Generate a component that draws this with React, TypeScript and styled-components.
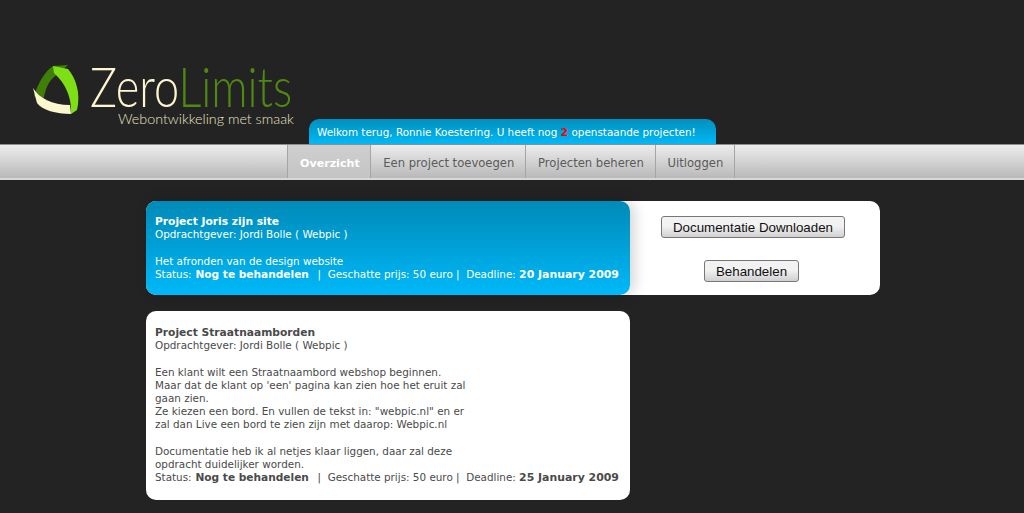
import styled, { createGlobalStyle } from "styled-components";

const GlobalStyle = createGlobalStyle`
  html, body {
    margin: 0;
    padding: 0;
    background: #232323;
  }
  body {
    font-family: "DejaVu Sans", Verdana, sans-serif;
    font-size: 10.4px;
    color: #4a4a4a;
  }
  b {
    font-size: 10.9px;
  }
`;

const Header = styled.header`
  height: 144px;
  display: flex;
  align-items: flex-end;
  padding-left: 30px;
`;

const Logo = styled.div`
  width: 279px;
  align-self: flex-start;
  margin-top: 62px;
  display: flex;
  gap: 5px;
`;

const LogoMark = styled.svg`
  width: 55px;
  height: 55px;
  flex: none;
`;

const LogoText = styled.div`
  display: flex;
  flex-direction: column;
`;

const LogoName = styled.div`
  font-family: Lato, sans-serif;
  font-weight: 300;
  font-size: 55px;
  line-height: 48px;
  color: #fdf6cf;
  white-space: nowrap;
  transform: scaleX(0.82);
  transform-origin: left center;
  span {
    color: #4f8a10;
  }
`;

const LogoSlogan = styled.div`
  font-family: Lato, sans-serif;
  font-weight: 300;
  font-size: 14.3px;
  line-height: 18px;
  color: #e8e3c0;
  margin-left: 28px;
  white-space: nowrap;
`;

const Welcome = styled.div`
  width: 407px;
  height: 25px;
  box-sizing: border-box;
  padding: 7px 0 0 8px;
  border-radius: 10px 10px 0 0;
  background: linear-gradient(#008fbe, #00b9f5);
  color: #fff;
  line-height: 13px;
  white-space: nowrap;
  b {
    color: #f00;
  }
`;

const Nav = styled.nav`
  height: 36px;
  box-sizing: border-box;
  border-top: 1px solid #8e8e8e;
  border-bottom: 2px solid #d8d8d8;
  background: linear-gradient(#ececec, #b9b9b9);
  display: flex;
  padding-left: 287px;
`;

const NavItem = styled.a<{ $active?: boolean }>`
  display: flex;
  align-items: center;
  height: 30px;
  padding: 3px ${(p) => (p.$active ? "10.5px" : "10.7px")} 0 ${(p) => (p.$active ? "12px" : "11px")};
  border-left: 1px solid ${(p) => (p.$active ? "#a5a5a5" : "transparent")};
  border-right: 1px solid #a5a5a5;
  font-size: ${(p) => (p.$active ? "11.1px" : "11.6px")};
  color: ${(p) => (p.$active ? "#fff" : "#5a5a5a")};
  font-weight: ${(p) => (p.$active ? "bold" : "normal")};
  background: ${(p) => (p.$active ? "linear-gradient(#cfcfcf, #c4c4c4)" : "none")};
  white-space: nowrap;
`;

const Content = styled.main`
  width: 734px;
  margin: 21px 0 0 146px;
  display: flex;
  flex-direction: column;
  gap: 16px;
`;

const Card = styled.section`
  display: flex;
  width: 734px;
  height: 94px;
  background: #fff;
  border-radius: 10px;
`;

const Project = styled.article<{ $highlight?: boolean }>`
  width: 484px;
  box-sizing: border-box;
  padding: 14px 9px 0 9px;
  border-radius: 10px;
  line-height: 13.2px;
  color: ${(p) => (p.$highlight ? "#fff" : "#4a4a4a")};
  background: ${(p) => (p.$highlight ? "linear-gradient(#008ab8, #00b9f8)" : "#fff")};
  box-shadow: ${(p) => (p.$highlight ? "4px 0 14px rgba(0, 0, 0, 0.18)" : "none")};
  white-space: nowrap;
`;

const Title = styled.b`
  font-size: 10.7px;
`;

const Actions = styled.div`
  flex: 1;
  display: flex;
  flex-direction: column;
  align-items: center;
  padding: 15px 4px 0 0;
  gap: 22px;
`;

const Button = styled.button`
  height: 22px;
  box-sizing: border-box;
  padding: 0 11px;
  font-family: "Liberation Sans", Arial, sans-serif;
  font-size: 13.33px;
  color: #111;
  background: linear-gradient(#f2f2f2 45%, #d0d0d0);
  border: 1px solid #777;
  border-radius: 3px;
  & + & {
    padding: 0 10.5px;
    margin-right: 3px;
  }
`;

const Meta = styled.div`
  white-space: pre;
`;

const StatusValue = styled.b`
  font-size: 10.6px;
  margin: 0 2px 0 0.5px;
`;

const Gap = styled.div`
  height: 13.2px;
`;

const Detail = styled(Project)`
  height: 189px;
  padding-top: 15px;
`;

function Status({ deadline }: { deadline: string }) {
  return (
    <Meta>
      Status: <StatusValue>Nog te behandelen</StatusValue> {" | "} Geschatte prijs: 50 euro | {" "}Deadline: <b>{deadline}</b>
    </Meta>
  );
}

export default function App() {
  return (
    <>
      <GlobalStyle />
      <Header>
        <Logo>
          <LogoMark viewBox="0 0 55 55">
            <path d="M38 3 L23 4 C14 10 8 22 4 34 L13 40 C15 28 18 18 28 12 Z" fill="#3f7f06" />
            <path d="M23 4 L38 7 C46 16 51 32 47 48 L41 52 C42 36 36 22 24 11 Z" fill="#7fdf17" />
            <path d="M3 26 C9 36 22 43 40 43 L41 52 C26 52 12 48 7 41 Z" fill="#fdf6cf" />
          </LogoMark>
          <LogoText>
            <LogoName>
              Zero<span>Limits</span>
            </LogoName>
            <LogoSlogan>Webontwikkeling met smaak</LogoSlogan>
          </LogoText>
        </Logo>
        <Welcome>
          Welkom terug, Ronnie Koestering. U heeft nog <b>2</b> openstaande projecten!
        </Welcome>
      </Header>
      <Nav>
        <NavItem $active>Overzicht</NavItem>
        <NavItem>Een project toevoegen</NavItem>
        <NavItem>Projecten beheren</NavItem>
        <NavItem>Uitloggen</NavItem>
      </Nav>
      <Content>
        <Card>
          <Project $highlight>
            <Title>Project Joris zijn site</Title>
            <br />
            Opdrachtgever: Jordi Bolle ( Webpic )
            <Gap />
            Het afronden van de design website
            <Status deadline="20 January 2009" />
          </Project>
          <Actions>
            <Button>Documentatie Downloaden</Button>
            <Button>Behandelen</Button>
          </Actions>
        </Card>
        <Detail>
          <Title>Project Straatnaamborden</Title>
          <br />
          Opdrachtgever: Jordi Bolle ( Webpic )
          <Gap />
          Een klant wilt een Straatnaambord webshop beginnen.
          <br />
          Maar dat de klant op 'een' pagina kan zien hoe het eruit zal
          <br />
          gaan zien.
          <br />
          Ze kiezen een bord. En vullen de tekst in: "webpic.nl" en er
          <br />
          zal dan Live een bord te zien zijn met daarop: Webpic.nl
          <Gap />
          Documentatie heb ik al netjes klaar liggen, daar zal deze
          <br />
          opdracht duidelijker worden.
          <Status deadline="25 January 2009" />
        </Detail>
      </Content>
    </>
  );
}
